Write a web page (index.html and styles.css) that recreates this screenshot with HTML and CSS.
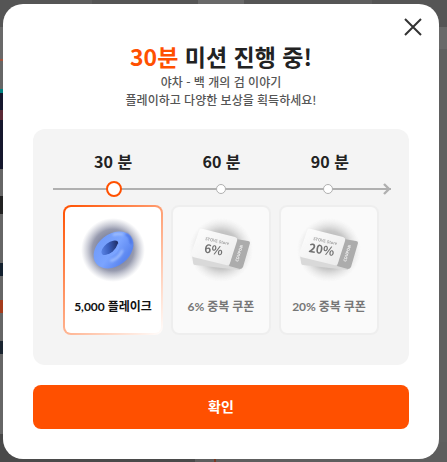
FILE: index.html
```html
<!DOCTYPE html>
<html lang="ko">
<head>
<meta charset="utf-8">
<title>미션 진행</title>
<meta name="viewport" content="width=device-width, initial-scale=1">
<link rel="stylesheet" href="styles.css">
</head>
<body>
<div class="page-edge"></div>
<div class="page-top"></div>
<div class="page-bottom"></div>
<main class="modal" role="dialog" aria-labelledby="title">
  <button class="close" type="button" aria-label="닫기">
    <svg viewBox="0 0 18 18" width="18" height="18"><path d="M1 1 17 17M17 1 1 17" fill="none" stroke="#333" stroke-width="2"/></svg>
  </button>
  <header class="heading">
    <h1 id="title"><em>30분</em> 미션 진행 중!</h1>
    <p>야차 - 백 개의 검 이야기<br>플레이하고 다양한 보상을 획득하세요!</p>
  </header>
  <section class="panel">
    <div class="times"><h2>30 분</h2><h2>60 분</h2><h2>90 분</h2></div>
    <div class="track">
      <span class="dot current"></span><span class="dot"></span><span class="dot"></span>
      <svg class="arrow" viewBox="0 0 8 12" width="8" height="12"><path d="m1 1 5 5-5 5" fill="none" stroke="#b0b0b0" stroke-width="2.4"/></svg>
    </div>
    <ul class="rewards">
      <li class="card active">
        <svg class="art" viewBox="0 0 64 64" width="64" height="64">
          <defs>
            <radialGradient id="navy"><stop offset="0" stop-color="#1c2450" stop-opacity=".8"/><stop offset=".65" stop-color="#30375f" stop-opacity=".5"/><stop offset=".88" stop-color="#5a6080" stop-opacity=".18"/><stop offset="1" stop-color="#777c98" stop-opacity="0"/></radialGradient>
            <linearGradient id="ring" x1="0" y1="0" x2=".4" y2="1"><stop offset="0" stop-color="#6f9af8"/><stop offset=".6" stop-color="#7ba4ff"/><stop offset="1" stop-color="#5b86f0"/></linearGradient>
            <linearGradient id="hole" x1="0" y1=".3" x2="1" y2=".6"><stop offset="0" stop-color="#5c86e8"/><stop offset=".45" stop-color="#3a5fbd"/><stop offset="1" stop-color="#1d2a60"/></linearGradient>
            <filter id="soft" x="-30%" y="-50%" width="160%" height="200%"><feGaussianBlur stdDeviation=".8"/></filter>
          </defs>
          <circle cx="32" cy="32" r="32" fill="url(#navy)"/>
          <g transform="rotate(-38 32.5 32)">
            <ellipse cx="32.5" cy="32" rx="22" ry="16" fill="url(#ring)"/>
            <ellipse cx="31" cy="28" rx="10" ry="5" fill="url(#hole)"/>
            <path d="M21 30q9 6 20-1-2 7-10 7-7 0-10-6z" fill="#7ba4ff"/>
            <path d="M24 39q7 3 15-1M42 20q5 2 7 5" fill="none" stroke="#a9c5ff" stroke-width="2" stroke-linecap="round" filter="url(#soft)"/>
            <path d="M52 27q3 5-2 11" fill="none" stroke="#416be0" stroke-width="2" filter="url(#soft)"/>
          </g>
        </svg>
        <p>5,000 플레이크</p>
      </li>
      <li class="card">
        <svg class="art coupon" viewBox="0 0 64 64" width="64" height="64">
          <defs>
            <radialGradient id="gray"><stop offset="0" stop-color="#666" stop-opacity=".9"/><stop offset=".6" stop-color="#888" stop-opacity=".6"/><stop offset="1" stop-color="#ccc" stop-opacity="0"/></radialGradient>
            <linearGradient id="paper" x1="0" y1="0" x2="1" y2="1"><stop offset="0" stop-color="#fff"/><stop offset="1" stop-color="#e6e6e6"/></linearGradient>
          </defs>
          <circle cx="32" cy="32" r="32" fill="url(#gray)"/>
          <path d="M3 38 52 44 51 52 6 47q-2 0-2-3z" fill="#cfcfcf"/>
          <path d="m47 21 12 2q2 0 2 2l-7 24q-1 2-3 2l-11-3z" fill="#929292"/>
          <path d="m14 11 32 8q3 1 2 4l-7 22q-1 3-4 2L4 39q-2-1-2-3l8-23q1-3 4-2z" fill="url(#paper)"/>
          <text class="small" transform="translate(16 22) rotate(12)">STOVE Store</text>
          <text class="rate" transform="translate(24 36) rotate(9)">6%</text>
          <text class="small side" transform="translate(49 44) rotate(-73)">COUPON</text>
        </svg>
        <p>6% 중복 쿠폰</p>
      </li>
      <li class="card">
        <svg class="art coupon" viewBox="0 0 64 64" width="64" height="64">
          <circle cx="32" cy="32" r="32" fill="url(#gray)"/>
          <path d="M3 38 52 44 51 52 6 47q-2 0-2-3z" fill="#cfcfcf"/>
          <path d="m47 21 12 2q2 0 2 2l-7 24q-1 2-3 2l-11-3z" fill="#929292"/>
          <path d="m14 11 32 8q3 1 2 4l-7 22q-1 3-4 2L4 39q-2-1-2-3l8-23q1-3 4-2z" fill="url(#paper)"/>
          <text class="small" transform="translate(16 22) rotate(12)">STOVE Store</text>
          <text class="rate" transform="translate(24 36) rotate(9)">20%</text>
          <text class="small side" transform="translate(49 44) rotate(-73)">COUPON</text>
        </svg>
        <p>20% 중복 쿠폰</p>
      </li>
    </ul>
  </section>
  <button class="confirm" type="button">확인</button>
</main>
</body>
</html>
```
FILE: styles.css
```css
* { box-sizing: border-box; margin: 0; padding: 0; }
body {
  min-height: 100vh;
  padding: 4px 8px 3px 3px;
  background: linear-gradient(#555 0 27px, #696969 27px 49px, #606060 49px);
  font-family: "Noto Sans CJK KR", sans-serif;
  color: #222;
}
/* Dimmed page behind the dialog */
.page-edge {
  position: absolute;
  top: 0;
  left: 0;
  width: 3px;
  height: 100%;
  background: linear-gradient(#555 0 27px, #696969 27px 59px, #a05440 59px 61px, #666 61px 89px, #008080 89px 93px, #15172d 93px 110px, #5a2935 110px 120px, #15172d 120px 169px, #666 169px 196px, #222 196px 214px, #666 214px 263px, #13202e 263px 276px, #666 276px 300px, #a43c1c 300px 313px, #666 313px 341px, #1a2530 341px 354px, #666 354px 434px, #484848 434px);
}
.page-top, .page-bottom { position: absolute; left: 0; right: 0; }
.page-top {
  top: 0;
  height: 27px;
  background: linear-gradient(90deg, #555 0 70px, #5e5e5e 70px 92px, #555 92px 198px, #696969 198px 244px, #555 244px 350px, #5e5e5e 350px 372px, #555 372px);
}
.page-bottom {
  bottom: 0;
  height: 20px;
  background: linear-gradient(90deg, #4a4a4a 0 195px, #5e5e5e 195px 214px, #7b3a25 214px 216px, #5e5e5e 216px);
}
.modal {
  position: relative;
  padding: 36px 30px 30px;
  border-radius: 20px;
  background: #fff;
}
.close {
  position: absolute;
  top: 14px;
  right: 17px;
  width: 18px;
  height: 18px;
  border: 0;
  background: none;
}
.close svg { display: block; }
.heading { text-align: center; }
h1 { font-size: 23px; line-height: 32px; }
h1 em { color: #ff5000; font-style: normal; }
.heading p { padding-top: 1px; font-size: 12px; line-height: 18px; color: #555; font-weight: 500; }
.panel {
  margin: 20px 0;
  padding: 20px 18px 30px 20px;
  border-radius: 12px;
  background: #f4f4f4;
}
.times { display: grid; grid-template-columns: repeat(3, 1fr); padding: 0 7px 0 6px; text-align: center; }
h2 { font-size: 16px; line-height: 24px; }
.track {
  position: relative;
  display: grid;
  grid-template-columns: repeat(3, 1fr);
  place-items: center;
  height: 16px;
  margin: 8px 0;
  padding: 0 9px 0 7px;
  background: linear-gradient(#b0b0b0, #b0b0b0) center / 100% 2px no-repeat;
}
.dot { width: 10px; height: 10px; border: 1px solid #b0b0b0; border-radius: 50%; background: #fff; }
.dot.current { width: 16px; height: 16px; border: 2px solid #ff5000; }
.arrow { position: absolute; right: 0; top: 2px; }
.rewards { display: grid; grid-template-columns: repeat(3, 1fr); gap: 8px; padding: 0 12px 0 10px; list-style: none; }
.card {
  padding: 11px 0 16px;
  border: 2px solid #eee;
  border-radius: 8px;
  background: #fafafa;
  text-align: center;
  color: #777;
}
.card.active {
  border-color: transparent;
  background: linear-gradient(#fff, #fff) padding-box, linear-gradient(135deg, #ff5000, #fff) border-box;
  color: #111;
}
.art { display: block; margin: 0 auto 15px; }
.art.coupon { opacity: .75; }
.card p { font-family: Lato, "Noto Sans CJK KR", sans-serif; font-size: 12px; font-weight: 700; line-height: 20px; }
.small { font-size: 4px; font-weight: 700; fill: #888; }
.side { fill: #eee; }
.rate { font-size: 12px; font-weight: 700; text-anchor: middle; fill: #444; }
.confirm {
  display: block;
  width: 100%;
  height: 44px;
  padding-bottom: 2px;
  border: 0;
  border-radius: 8px;
  background: #ff5000;
  color: #fff;
  font: 700 14px "Noto Sans CJK KR", sans-serif;
}
```
